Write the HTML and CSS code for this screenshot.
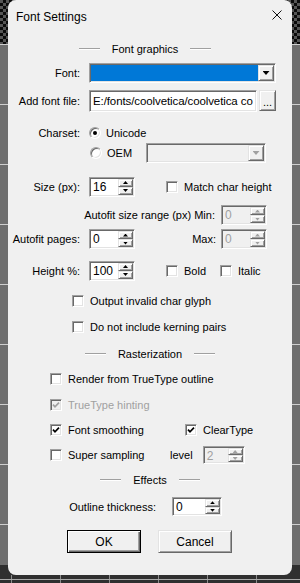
FILE: index.html
```html
<!DOCTYPE html>
<html>
<head>
    <meta charset="UTF-8">
    <title>Font Settings</title>
    <link rel="stylesheet" href="styles.css">
</head>
<body>
    <div class="dialog">
        <div class="titlebar">
            <span class="title">Font Settings</span>
            <svg class="close" viewBox="0 0 10 10">
                <path d="M0.5 0.5 L9.5 9.5 M9.5 0.5 L0.5 9.5" stroke="#111" stroke-width="1" fill="none"/>
            </svg>
        </div>

        <div class="content">
            <!-- Font graphics -->
            <div class="group-title shift"><span class="rule"></span><span>Font graphics</span><span class="rule"></span></div>

            <div class="row r-font">
                <span class="lbl">Font:</span>
                <div class="combo font-combo">
                    <div class="combo-sel"></div>
                    <div class="drop"><i class="tri"></i></div>
                </div>
            </div>

            <div class="row r-file">
                <span class="lbl">Add font file:</span>
                <div class="edit file-edit">E:/fonts/coolvetica/coolvetica co</div>
                <div class="browse">...</div>
            </div>

            <div class="row r-unicode">
                <span class="lbl">Charset:</span>
                <span class="radio on"></span>
                <span class="radio-text">Unicode</span>
            </div>

            <div class="row r-oem">
                <span class="radio"></span>
                <span class="radio-text">OEM</span>
                <div class="combo oem-combo disabled">
                    <div class="combo-sel"></div>
                    <div class="drop"><i class="tri"></i></div>
                </div>
            </div>

            <div class="row r-size">
                <span class="lbl">Size (px):</span>
                <div class="spin"><span class="spin-val">16</span><div class="spin-btns"><span class="up"></span><span class="down"></span></div></div>
                <label class="chk col2"><span class="box"></span>Match char height</label>
            </div>

            <div class="row r-min">
                <span class="side-lbl">Autofit size range (px) Min:</span>
                <div class="spin disabled"><span class="spin-val">0</span><div class="spin-btns"><span class="up"></span><span class="down"></span></div></div>
            </div>

            <div class="row r-pages">
                <span class="lbl">Autofit pages:</span>
                <div class="spin"><span class="spin-val">0</span><div class="spin-btns"><span class="up"></span><span class="down"></span></div></div>
                <span class="side-lbl max">Max:</span>
                <div class="spin disabled"><span class="spin-val">0</span><div class="spin-btns"><span class="up"></span><span class="down"></span></div></div>
            </div>

            <div class="row r-height">
                <span class="lbl">Height %:</span>
                <div class="spin"><span class="spin-val">100</span><div class="spin-btns"><span class="up"></span><span class="down"></span></div></div>
                <label class="chk col2 bold-item"><span class="box"></span>Bold</label>
                <label class="chk"><span class="box"></span>Italic</label>
            </div>

            <div class="row r-invalid indent1">
                <label class="chk"><span class="box"></span>Output invalid char glyph</label>
            </div>

            <div class="row r-kerning indent1">
                <label class="chk"><span class="box"></span>Do not include kerning pairs</label>
            </div>

            <!-- Rasterization -->
            <div class="group-title r-raster"><span class="rule"></span><span>Rasterization</span><span class="rule"></span></div>

            <div class="row r-outline indent2">
                <label class="chk"><span class="box"></span>Render from TrueType outline</label>
            </div>

            <div class="row r-hinting indent2">
                <label class="chk disabled"><span class="box checked"><svg viewBox="0 0 8 8"><path d="M1 3.6 L3 5.8 L7 1.6" /></svg></span>TrueType hinting</label>
            </div>

            <div class="row r-smooth indent2">
                <label class="chk smooth-item"><span class="box checked"><svg viewBox="0 0 8 8"><path d="M1 3.6 L3 5.8 L7 1.6" /></svg></span>Font smoothing</label>
                <label class="chk"><span class="box checked"><svg viewBox="0 0 8 8"><path d="M1 3.6 L3 5.8 L7 1.6" /></svg></span>ClearType</label>
            </div>

            <div class="row r-super indent2">
                <label class="chk super-item"><span class="box"></span>Super sampling</label>
                <span class="level-lbl">level</span>
                <div class="spin disabled level"><span class="spin-val">2</span><div class="spin-btns"><span class="up"></span><span class="down"></span></div></div>
            </div>

            <!-- Effects -->
            <div class="group-title r-effects"><span class="rule"></span><span>Effects</span><span class="rule"></span></div>

            <div class="row r-thick">
                <span class="thick-lbl">Outline thickness:</span>
                <div class="spin thick"><span class="spin-val">0</span><div class="spin-btns"><span class="up"></span><span class="down"></span></div></div>
            </div>

            <div class="row r-buttons">
                <div class="btn default">OK</div>
                <div class="btn">Cancel</div>
            </div>
        </div>
    </div>
</body>
</html>
```

FILE: styles.css
```css
* {
    margin: 0;
    padding: 0;
    box-sizing: border-box;
}

body {
    width: 300px;
    height: 583px;
    overflow: hidden;
    font-family: "Liberation Sans", Arial, sans-serif;
    font-size: 11px;
    color: #000;
    background:
        linear-gradient(#a8a8a8, #a8a8a8) 0 579px / 100% 1px no-repeat,
        repeating-linear-gradient(90deg, transparent 0 11px, #8c8c8c 11px 12px, transparent 12px 49px) 0 575px / 100% 8px no-repeat,
        linear-gradient(#2f2f2f, #2f2f2f) 0 565px / 100% 18px no-repeat,
        repeating-linear-gradient(#cfcfcf 0 1px, transparent 1px 60px) 0 44px / 100% 521px no-repeat,
        linear-gradient(#6e6e6e, #6e6e6e) 0 44px / 100% 100% no-repeat,
        repeating-conic-gradient(#0b0b0b 0 25%, #565656 0 50%) 0 0 / 6px 6px;
}

/* Window */
.dialog {
    margin-left: 8px;
    width: 284px;
    height: 575px;
    background: #f0f0f0;
    border-radius: 8px;
}

.titlebar {
    height: 32px;
    display: flex;
    align-items: center;
    justify-content: space-between;
    padding: 0 10px 0 8px;
}

.title {
    font-size: 12px;
    padding-top: 1px;
}

.close {
    width: 10px;
    height: 10px;
    margin-bottom: 3px;
}

.content {
    padding-top: 9px;
}

/* Group captions with etched rules */
.group-title {
    height: 16px;
    display: flex;
    align-items: center;
    justify-content: center;
    gap: 12px;
}

.group-title.shift { padding-right: 10px; }

.rule {
    width: 21px;
    height: 2px;
    border-top: 1px solid #a0a0a0;
    border-bottom: 1px solid #fff;
}

.row {
    display: flex;
    align-items: center;
    white-space: nowrap;
}

.lbl {
    flex: none;
    width: 72px;
    margin-right: 9px;
    text-align: right;
}

/* Row spacing */
.r-font    { margin-top: 6px;  height: 20px; }
.r-file    { margin-top: 7px;  height: 22px; }
.r-unicode { margin-top: 14px; height: 13px; }
.r-oem     { margin-top: 4px;  height: 20px; padding-left: 82px; padding-right: 26px; }
.r-size    { margin-top: 13px; height: 21px; }
.r-min     { margin-top: 8px;  height: 20px; justify-content: flex-end; padding-right: 25px; }
.r-pages   { margin-top: 4px;  height: 20px; padding-right: 25px; }
.r-height  { margin-top: 11px; height: 21px; }
.r-invalid { margin-top: 13px; height: 13px; }
.r-kerning { margin-top: 13px; height: 13px; }
.r-raster  { margin-top: 13px; }
.r-outline { margin-top: 10px; height: 13px; }
.r-hinting { margin-top: 13px; height: 13px; }
.r-smooth  { margin-top: 12px; height: 13px; }
.r-super   { margin-top: 10px; height: 18px; }
.r-effects { margin-top: 8px; }
.r-thick   { margin-top: 9px;  height: 19px; }
.r-buttons { margin-top: 14px; height: 23px; padding-left: 59px; gap: 17px; }

.indent1 { padding-left: 64px; }
.indent2 { padding-left: 42px; }

/* Sunken fields */
.edit,
.spin,
.combo,
.box,
.radio {
    background: #fff;
    border: 1px solid;
    border-color: #a0a0a0 #fff #fff #a0a0a0;
    box-shadow: inset 1px 1px #696969, inset -1px -1px #e3e3e3;
}

/* Raised buttons */
.drop,
.browse,
.spin-btns span,
.btn {
    background: #f0f0f0;
    border: 1px solid;
    border-color: #e3e3e3 #696969 #696969 #e3e3e3;
    box-shadow: inset 1px 1px #fff, inset -1px -1px #a0a0a0;
}

.combo {
    display: flex;
    height: 20px;
    padding: 1px;
}

.font-combo { width: 187px; }

.combo-sel {
    flex: 1;
    background: #0078d7;
}

.drop {
    width: 16px;
    display: flex;
    align-items: center;
    justify-content: center;
}

.tri {
    width: 7px;
    height: 4px;
    background: #000;
    clip-path: polygon(0 0, 100% 0, 50% 100%);
}

.oem-combo {
    width: 120px;
    margin-left: auto;
}

.combo.disabled,
.combo.disabled .combo-sel {
    background: #f0f0f0;
}

.combo.disabled .tri { background: #a0a0a0; }

.file-edit {
    width: 168px;
    height: 22px;
    padding: 0 2px 0 3px;
    line-height: 20px;
    font-size: 11.5px;
    letter-spacing: -0.1px;
    overflow: hidden;
}

.browse {
    width: 17px;
    height: 21px;
    margin-left: 2px;
    text-align: center;
    line-height: 22px;
    align-self: flex-start;
}

/* Radio buttons */
.radio {
    flex: none;
    width: 12px;
    height: 12px;
    border-radius: 50%;
    display: flex;
    align-items: center;
    justify-content: center;
}

.radio.on::after {
    content: '';
    width: 4px;
    height: 4px;
    border-radius: 50%;
    background: #000;
}

.radio-text { margin-left: 5px; }

/* Spin boxes */
.spin {
    flex: none;
    display: flex;
    width: 46px;
    height: 20px;
    padding: 1px;
}

.spin-val {
    flex: 1;
    padding-left: 2px;
    font-size: 12px;
    line-height: 16px;
}

.spin-btns {
    width: 15px;
    display: flex;
    flex-direction: column;
}

.spin-btns span {
    flex: 1;
    display: flex;
    align-items: center;
    justify-content: center;
}

.spin-btns span::after {
    content: '';
    width: 5px;
    height: 3px;
    background: #000;
}

.spin-btns .up::after { clip-path: polygon(50% 0, 100% 100%, 0 100%); }
.spin-btns .down::after { clip-path: polygon(0 0, 100% 0, 50% 100%); }

.spin.disabled { background: #f0f0f0; }
.spin.disabled .spin-val { color: #a0a0a0; }
.spin.disabled .spin-btns span::after { background: #a0a0a0; }

.spin.level {
    width: 42px;
    height: 18px;
}

.spin.thick {
    width: 50px;
    height: 19px;
}

.side-lbl { margin-right: 6px; }
.side-lbl.max { margin-left: auto; margin-right: 5px; }

/* Checkboxes */
.chk {
    display: flex;
    align-items: center;
    gap: 6px;
}

.box {
    flex: none;
    width: 12px;
    height: 12px;
    display: flex;
    align-items: center;
    justify-content: center;
}

.box svg {
    width: 8px;
    height: 8px;
}

.box svg path {
    fill: none;
    stroke: #000;
    stroke-width: 1.7;
}

.chk.disabled { color: #a0a0a0; }
.chk.disabled .box { background: #f0f0f0; }
.chk.disabled .box svg path { stroke: #a0a0a0; }

.col2 { margin-left: 31px; }
.bold-item { width: 54px; }
.smooth-item { width: 135px; }
.super-item { width: 120px; }

.level-lbl { margin-right: 10px; }

.thick-lbl {
    width: 148px;
    margin-right: 16px;
    text-align: right;
}

/* Dialog buttons */
.btn {
    width: 74px;
    height: 23px;
    display: flex;
    align-items: center;
    justify-content: center;
    font-size: 12px;
}

.btn.default {
    border-color: #000;
    box-shadow: inset 1px 1px #fff, inset -1px -1px #696969, inset -2px -2px #a0a0a0;
}
```
